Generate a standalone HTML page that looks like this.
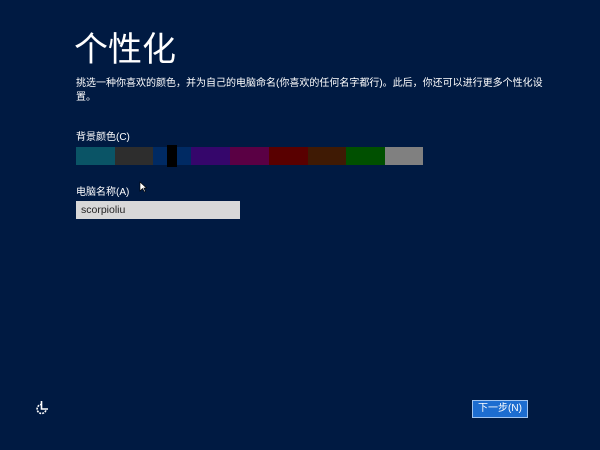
<!DOCTYPE html>
<html><head><meta charset="utf-8"><style>
body{margin:0;width:600px;height:450px;background:#001a42;overflow:hidden;position:relative;font-family:"Liberation Sans","Noto Sans CJK SC",sans-serif;color:#fff}
.a{position:absolute;white-space:nowrap}
.sw{position:absolute;top:147px;height:18px;width:39px}
</style></head><body>
<div class="a" style="left:74px;top:22px;font-size:34px;">个性化</div>
<div class="a" style="left:76px;top:77px;font-size:10px;line-height:14px;">挑选一种你喜欢的颜色，并为自己的电脑命名(你喜欢的任何名字都行)。此后，你还可以进行更多个性化设<br>置。</div>
<div class="a" style="left:76px;top:128px;font-size:10px;">背景颜色(C)</div>
<div class="sw" style="left:76px;background:#0a5466"></div>
<div class="sw" style="left:115px;background:#2d2d2d"></div>
<div class="sw" style="left:153px;background:#002a63"></div>
<div class="a" style="left:167px;top:145px;width:10px;height:22px;background:#000"></div>
<div class="sw" style="left:191px;background:#35066b"></div>
<div class="sw" style="left:230px;background:#5a0044"></div>
<div class="sw" style="left:269px;background:#590000"></div>
<div class="sw" style="left:308px;background:#3f1a04"></div>
<div class="sw" style="left:346px;background:#005000"></div>
<div class="sw" style="left:385px;width:38px;background:#808080"></div>
<div class="a" style="left:76px;top:183px;font-size:10px;">电脑名称(A)</div>
<div class="a" style="left:76px;top:201px;width:164px;height:18px;background:#d8d8d8;color:#222;font-size:10.5px;line-height:18px;box-sizing:border-box;padding-left:5px;">scorpioliu</div>
<svg class="a" style="left:139px;top:181px" width="8" height="12"><path d="M1 1V10L3.5 7.5L5.5 11L6.5 10.5L4.8 7H7.5Z" fill="#fff" stroke="#000" stroke-width=".6"/></svg>
<svg class="a" style="left:33px;top:399px" width="18" height="18"><path d="M9 5.5A4.5 4.5 0 1 0 13 11" fill="none" stroke="#fff" stroke-width="1.6" stroke-dasharray="2 1"/><path d="M8.5 2V10H15" fill="none" stroke="#fff" stroke-width="1.6"/></svg>
<div class="a" style="left:472px;top:400px;width:56px;height:18px;background:#1d6dd0;border:1px solid #a0c4f0;box-sizing:border-box;font-size:10px;line-height:16px;text-align:center;">下一步(N)</div>
</body></html>
